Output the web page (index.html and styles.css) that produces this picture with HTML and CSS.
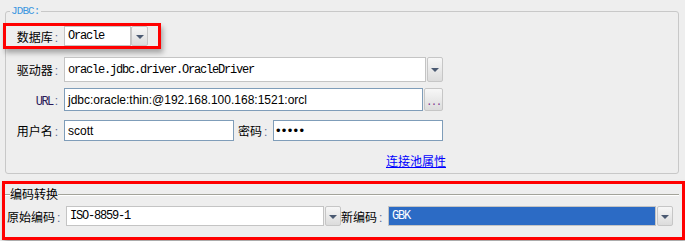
FILE: index.html
```html
<!DOCTYPE html>
<html>
<head>
<meta charset="utf-8">
<link rel="stylesheet" href="styles.css">
</head>
<body>
<div class="group">
  <div class="group-title">JDBC:</div>
  <div class="row row-db hl">
    <span class="label">数据库<i>:</i></span>
    <div class="combo w-db"><div class="field mono">Oracle</div><div class="btn"><b></b></div></div>
  </div>
  <div class="row row-drv">
    <span class="label">驱动器<i>:</i></span>
    <div class="combo w-drv gap"><div class="field mono">oracle.jdbc.driver.OracleDriver</div><div class="btn"><b></b></div></div>
  </div>
  <div class="row row-url">
    <span class="label"><span class="mono-s">URL</span><i>:</i></span>
    <div class="text w-url">jdbc:oracle:thin:@192.168.100.168:1521:orcl</div>
    <div class="dots-btn">...</div>
  </div>
  <div class="row row-user">
    <span class="label">用户名<i>:</i></span>
    <div class="text w-user">scott</div>
    <span class="label2">密码<i>:</i></span>
    <div class="text w-user pwd">•••••</div>
  </div>
  <div class="link-row"><a href="#">连接池属性</a></div>
</div>
<div class="encode">
  <div class="enc-title"><span class="seg"></span><span class="t">编码转换</span><span class="line"></span></div>
  <div class="enc-row">
    <span class="label3">原始编码<i>:</i></span>
    <div class="combo w-src gap"><div class="field mono">ISO-8859-1</div><div class="btn"><b></b></div></div>
    <span class="label4">新编码<i>:</i></span>
    <div class="combo w-dst gap"><div class="field mono sel">GBK</div><div class="btn"><b></b></div></div>
  </div>
</div>
</body>
</html>
```
FILE: styles.css
```css
* { box-sizing: border-box; }
html, body { margin: 0; padding: 0; }
body {
  width: 685px;
  height: 241px;
  overflow: hidden;
  background: #eeeeee;
  font-family: "Noto Sans CJK SC", sans-serif;
  font-size: 12px;
  color: #000;
}
.group {
  margin: 11px 6px 0 5px;
  height: 163px;
  border: 1px solid #c8c8c8;
  border-radius: 3px;
}
.group-title {
  display: table;
  margin: -7px 0 0 4px;
  padding: 0 1px;
  background: #eeeeee;
  font-family: "Liberation Mono", monospace;
  font-size: 11px;
  letter-spacing: -0.9px;
  line-height: 13px;
  color: #3d97e0;
}
.row { display: flex; align-items: center; }
.label {
  flex: 0 0 52px;
  margin-right: 6px;
  text-align: right;
  white-space: nowrap;
}
.label i, .label2 i, .label3 i, .label4 i {
  font-style: normal;
  font-family: "Liberation Sans", sans-serif;
  margin-left: 2px;
  color: #5a6690;
}
.mono-s {
  font-family: "Liberation Mono", monospace;
  font-size: 12px;
  letter-spacing: -1.6px;
  color: #2a1a5a;
}
.hl {
  box-shadow: 0 0 0 3px #ff0000, 2px 4px 5px 3px rgba(0,0,0,0.3);
}
.row-db { margin-top: 8px; height: 20px; width: 152px; }
.row-drv { margin-top: 11px; height: 25px; }
.row-url { margin-top: 6px; height: 23px; }
.row-user { margin-top: 9px; height: 21px; }

.combo { display: flex; height: 100%; }
.combo.gap .btn { margin-left: 1px; }
.field {
  flex: 1;
  height: 100%;
  background: #fff;
  border: 1px solid #c4c4c4;
  padding-left: 3px;
  display: flex;
  align-items: center;
  white-space: nowrap;
  overflow: hidden;
}
.mono {
  font-family: "Liberation Mono", monospace;
  font-size: 12px;
  letter-spacing: -1.2px;
  color: #000;
}
.btn {
  flex: 0 0 16px;
  height: 100%;
  border: 1px solid #c6c6c6;
  border-radius: 2px;
  background: linear-gradient(#f7f7f7, #dcdcdc);
  display: flex;
  align-items: center;
  justify-content: center;
}
.btn b {
  width: 0;
  height: 0;
  border-left: 4px solid transparent;
  border-right: 4px solid transparent;
  border-top: 4px solid #4b5a72;
  margin-top: 1px;
}
.w-db { width: 84px; }
.w-db .btn { flex-basis: 17px; }
.w-drv { width: 379px; }

.text {
  height: 100%;
  background: #fff;
  border: 1px solid #7f9db9;
  padding-left: 3px;
  display: flex;
  align-items: center;
  font-family: "Liberation Sans", sans-serif;
  font-size: 12px;
  white-space: nowrap;
}
.w-url { width: 359px; }
.dots-btn {
  width: 19px;
  height: 100%;
  margin-left: 1px;
  border: 1px solid #c6c6c6;
  border-radius: 2px;
  background: linear-gradient(#f7f7f7, #dcdcdc);
  font-family: "Liberation Mono", monospace;
  font-size: 10px;
  letter-spacing: -1.2px;
  line-height: 28px;
  text-align: center;
  color: #7a2a8a;
}
.w-user { width: 170px; }
.label2 { margin-left: 4px; width: 35px; white-space: nowrap; }
.pwd { font-size: 13px; letter-spacing: 1.3px; padding-left: 2px; }

.link-row {
  width: 440px;
  margin-top: 13px;
  text-align: right;
  line-height: 14px;
}
.link-row a { color: #0000ff; text-decoration: underline; }

.encode {
  margin: 10px 3px 0 5px;
  height: 53px;
  box-shadow: 0 0 0 3px #ff0000, 2px 4px 5px 3px rgba(0,0,0,0.3);
}
.enc-title {
  display: flex;
  align-items: center;
  padding-top: 2px;
  line-height: 16px;
  height: 18px;
}
.enc-title .seg, .enc-title .line {
  height: 2px;
  margin-top: 2px;
  border-top: 1px solid #a3a39a;
  border-bottom: 1px solid #ffffff;
}
.enc-title .seg { width: 5px; }
.enc-title .line { flex: 1; margin-right: 3px; }
.enc-row { display: flex; align-items: center; height: 20px; margin-top: 4px; }
.label3 { flex: 0 0 61px; padding-left: 2px; white-space: nowrap; }
.label4 { flex: 0 0 47px; white-space: nowrap; }
.w-src { width: 275px; }
.w-dst { width: 285px; }
.sel { background: #2c6bc5; color: #fff; border-color: #c4c4c4; }
```
